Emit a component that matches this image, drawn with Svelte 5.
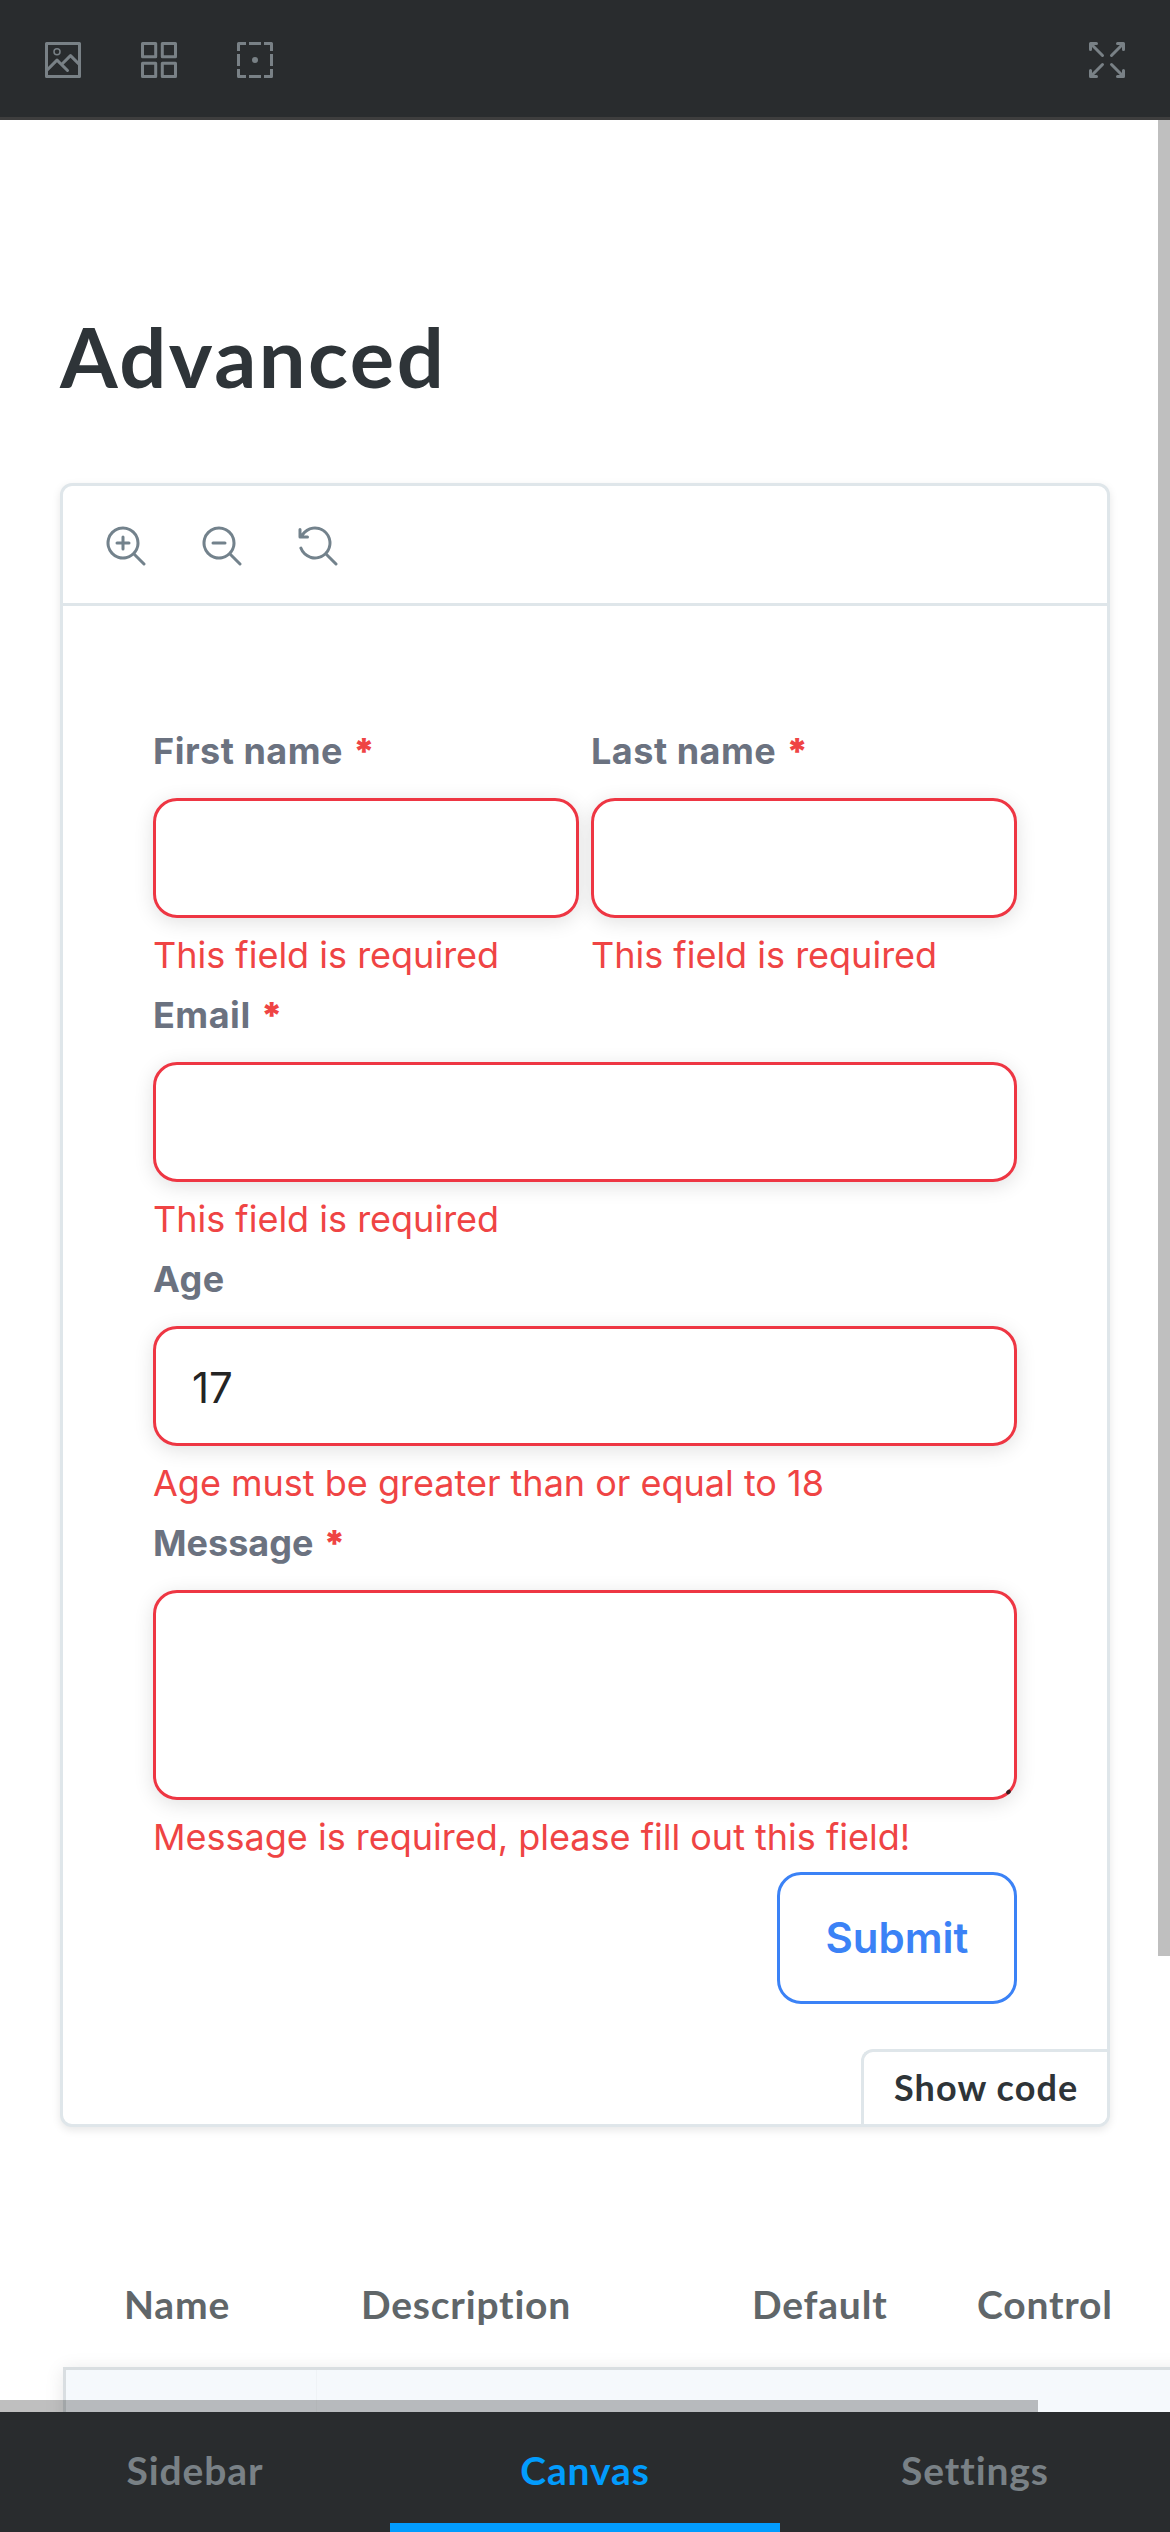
<script>
  const expandArms = [
    'translate(0 0)',
    'translate(14 0) scale(-1 1)',
    'translate(0 14) scale(1 -1)',
    'translate(14 14) scale(-1 -1)',
  ];
  const names = [
    { label: 'First name', error: 'This field is required' },
    { label: 'Last name', error: 'This field is required' },
  ];
  const tabs = ['Sidebar', 'Canvas', 'Settings'];
  const active = 'Canvas';
  const age = '17';
</script>

{#snippet lens()}
  <path
    d="M9.544 10.206a5.5 5.5 0 11.662-.662.5.5 0 01.148.102l3 3a.5.5 0 01-.708.708l-3-3a.5.5 0 01-.102-.148zM10.5 6a4.5 4.5 0 11-9 0 4.5 4.5 0 019 0z"
    fill-rule="evenodd"
  />
{/snippet}

{#snippet field(label, error, required, value)}
  <div class="field">
    <div class="label">{label}{#if required}<span class="star">*</span>{/if}</div>
    <div class="input">{value}</div>
    <div class="error">{error}</div>
  </div>
{/snippet}

<div class="app">
  <header class="topbar">
    <svg class="icon" viewBox="0 0 14 14">
      <path fill-rule="evenodd" d="M6.25 4.254a1.25 1.25 0 11-2.5 0 1.25 1.25 0 012.5 0zm-.5 0a.75.75 0 11-1.5 0 .75.75 0 011.5 0z" />
      <path fill-rule="evenodd" d="M13 1.504v11a.5.5 0 01-.5.5h-11a.5.5 0 01-.5-.5v-11a.5.5 0 01.5-.5h11a.5.5 0 01.5.5zM2 9.297V2.004h10v5.293L9.854 5.15a.5.5 0 00-.708 0L6.5 7.797 5.354 6.65a.5.5 0 00-.708 0L2 9.297zM9.5 6.21l2.5 2.5v3.293H2V10.71l3-3 3.146 3.146a.5.5 0 00.708-.707L7.207 8.504 9.5 6.21z" />
    </svg>
    <svg class="icon" viewBox="0 0 14 14">
      <g class="line">
        <rect x="1.5" y="1.5" width="4.4" height="4.4" />
        <rect x="8.1" y="1.5" width="4.4" height="4.4" />
        <rect x="1.5" y="8.1" width="4.4" height="4.4" />
        <rect x="8.1" y="8.1" width="4.4" height="4.4" />
      </g>
    </svg>
    <svg class="icon" viewBox="0 0 14 14">
      <path class="line" d="M1.5 4V1.5H4M5 1.5h4M10 1.5h2.5V4M12.5 5v4M12.5 10v2.5H10M9 12.5H5M4 12.5H1.5V10M1.5 9V5" />
      <circle cx="7" cy="7" r="1" />
    </svg>
    <svg class="icon last" viewBox="0 0 14 14">
      {#each expandArms as t}
        <path transform={t} d="M1.5 1h2a.5.5 0 010 1h-.793l3.147 3.146a.5.5 0 11-.708.708L2 2.707V3.5a.5.5 0 01-1 0v-2a.5.5 0 01.5-.5z" />
      {/each}
    </svg>
  </header>

  <main>
    <h1>Advanced</h1>

    <section class="card">
      <div class="tools">
        <svg class="icon" viewBox="0 0 14 14">
          <path d="M6 3.5a.5.5 0 01.5.5v1.5H8a.5.5 0 010 1H6.5V8a.5.5 0 01-1 0V6.5H4a.5.5 0 010-1h1.5V4a.5.5 0 01.5-.5z" />
          {@render lens()}
        </svg>
        <svg class="icon" viewBox="0 0 14 14">
          <path d="M4 5.5a.5.5 0 000 1h4a.5.5 0 000-1H4z" />
          {@render lens()}
        </svg>
        <svg class="icon" viewBox="0 0 14 14">
          <path d="M1.5 2.837V1.5a.5.5 0 00-1 0V4a.5.5 0 00.5.5h2.5a.5.5 0 000-1H2.258a4.5 4.5 0 11-.496 4.016.5.5 0 10-.942.337 5.502 5.502 0 008.724 2.353.5.5 0 00.102.148l3 3a.5.5 0 00.708-.708l-3-3a.5.5 0 00-.148-.102A5.5 5.5 0 101.5 2.837z" />
        </svg>
      </div>

      <div class="form">
        <div class="pair">
          {#each names as n}
            {@render field(n.label, n.error, true, '')}
          {/each}
        </div>
        {@render field('Email', 'This field is required', true, '')}
        {@render field('Age', 'Age must be greater than or equal to 18', false, age)}
        <div class="field">
          <div class="label tight">Message<span class="star">*</span></div>
          <div class="input area"><i class="grip"></i></div>
          <div class="error">Message is required, please fill out this field!</div>
        </div>
        <div class="submit">Submit</div>
      </div>
      <div class="show">Show code</div>
    </section>

    <div class="args">
      <div class="head">
        <span>Name</span><span>Description</span><span>Default</span><span>Control</span>
      </div>
      <div class="body"><div class="cell"></div></div>
    </div>

    <div class="vbar"></div>
    <div class="hbar"></div>
  </main>

  <nav>
    {#each tabs as tab}
      <div class="tab" class:on={tab === active}><span>{tab}</span></div>
    {/each}
  </nav>
</div>

<style>
  :global(body) {
    background: #fff;
  }
  .app {
    width: 1170px;
    height: 2532px;
    display: flex;
    flex-direction: column;
    overflow: hidden;
    font-family: Lato, 'Open Sans', sans-serif;
  }
  .topbar {
    box-sizing: border-box;
    height: 120px;
    flex: none;
    display: flex;
    align-items: center;
    gap: 54px;
    padding: 0 42px;
    background: #292c2e;
    border-bottom: 3px solid #3e3e3e;
    color: #798186;
  }
  .topbar .icon {
    margin-top: 3px;
  }
  .icon {
    width: 42px;
    height: 42px;
    flex: none;
    display: block;
    fill: currentColor;
  }
  .icon.last {
    margin-left: auto;
  }
  .line {
    fill: none;
    stroke: currentColor;
    stroke-width: 1;
    stroke-linejoin: round;
  }
  main {
    position: relative;
    flex: 1;
    min-height: 0;
    overflow: hidden;
    background: #fff;
  }
  h1 {
    margin: 176px 0 0 60px;
    height: 120px;
    line-height: 120px;
    font-size: 83px;
    font-weight: 700;
    letter-spacing: 2.5px;
    color: #2e3438;
  }
  .card {
    position: relative;
    box-sizing: border-box;
    width: 1050px;
    height: 1644px;
    margin: 67px 0 0 60px;
    border: 3px solid #dfe6ea;
    border-radius: 12px;
    box-shadow: 0 3px 9px rgba(0, 0, 0, 0.1);
    background: #fff;
  }
  .tools {
    box-sizing: border-box;
    height: 120px;
    display: flex;
    align-items: center;
    gap: 54px;
    padding: 3px 42px 0;
    border-bottom: 3px solid #dfe6ea;
    color: #73828c;
  }
  .form {
    display: flex;
    flex-direction: column;
    padding: 115px 90px 0;
    font-family: Inter, 'Liberation Sans', sans-serif;
  }
  .pair {
    display: grid;
    grid-template-columns: 1fr 1fr;
    gap: 12px;
  }
  .label,
  .error {
    height: 60px;
    line-height: 60px;
    font-size: 36px;
    white-space: nowrap;
  }
  .label {
    margin-bottom: 17px;
    font-weight: 700;
    letter-spacing: 0.5px;
    color: #6b7280;
  }
  .label.tight {
    letter-spacing: 0;
  }
  .star {
    margin-left: 10px;
    font-weight: 900;
    color: #ef4444;
  }
  .error {
    margin-top: 7px;
    color: #ef4444;
  }
  .input {
    position: relative;
    box-sizing: border-box;
    height: 120px;
    padding: 0 36px;
    border: 3px solid #ee3643;
    border-radius: 24px;
    box-shadow: 0 4px 20px rgba(0, 0, 0, 0.12);
    background: #fff;
    font-size: 42px;
    line-height: 118px;
    color: #242424;
  }
  .area {
    height: 210px;
  }
  .grip {
    position: absolute;
    right: 3px;
    bottom: 3px;
    width: 5px;
    height: 4px;
    border-radius: 2px;
    background: #3a1a1e;
    transform: rotate(-35deg);
  }
  .submit {
    box-sizing: border-box;
    align-self: flex-end;
    width: 240px;
    height: 132px;
    margin-top: 5px;
    border: 3px solid #3b82f6;
    border-radius: 24px;
    text-align: center;
    font-size: 42px;
    font-weight: 600;
    line-height: 125px;
    color: #3b82f6;
  }
  .show {
    position: absolute;
    right: 0;
    bottom: 0;
    box-sizing: border-box;
    width: 246px;
    height: 75px;
    padding-left: 30px;
    border: solid #dfe6ea;
    border-width: 3px 0 0 3px;
    border-radius: 12px 0 9px 0;
    background: #fff;
    font-size: 36px;
    font-weight: 700;
    letter-spacing: 1.1px;
    line-height: 71px;
    white-space: nowrap;
    color: #2e3438;
  }
  .args {
    width: 1200px;
    margin: 147px 0 0 63px;
  }
  .head {
    display: grid;
    grid-template-columns: 237px 391px 225px 1fr;
    height: 93px;
    padding-left: 61px;
    font-size: 39px;
    font-weight: 700;
    letter-spacing: 0.8px;
    line-height: 61px;
    color: #606669;
  }
  .body {
    height: 200px;
    border: 3px solid #d9dee1;
    background: #f5f9fc;
    box-shadow: 0 3px 18px rgba(0, 0, 0, 0.1);
  }
  .cell {
    width: 250px;
    height: 100%;
    border-right: 1px solid #eff3f6;
  }
  .vbar,
  .hbar {
    position: absolute;
    background: rgba(0, 0, 0, 0.25);
  }
  .vbar {
    top: 0;
    right: 0;
    width: 12px;
    height: 1836px;
  }
  .hbar {
    left: 0;
    bottom: 0;
    width: 1038px;
    height: 12px;
  }
  nav {
    flex: none;
    display: grid;
    grid-template-columns: repeat(3, 1fr);
    grid-template-rows: 120px;
    height: 120px;
    background: #292c2e;
  }
  .tab {
    box-sizing: border-box;
    height: 120px;
    border-bottom: 9px solid transparent;
    text-align: center;
    font-size: 39px;
    font-weight: 700;
    letter-spacing: 0.9px;
    line-height: 117px;
    color: #798186;
  }
  .tab.on {
    color: #029cfd;
    border-bottom-color: #029cfd;
  }
</style>
